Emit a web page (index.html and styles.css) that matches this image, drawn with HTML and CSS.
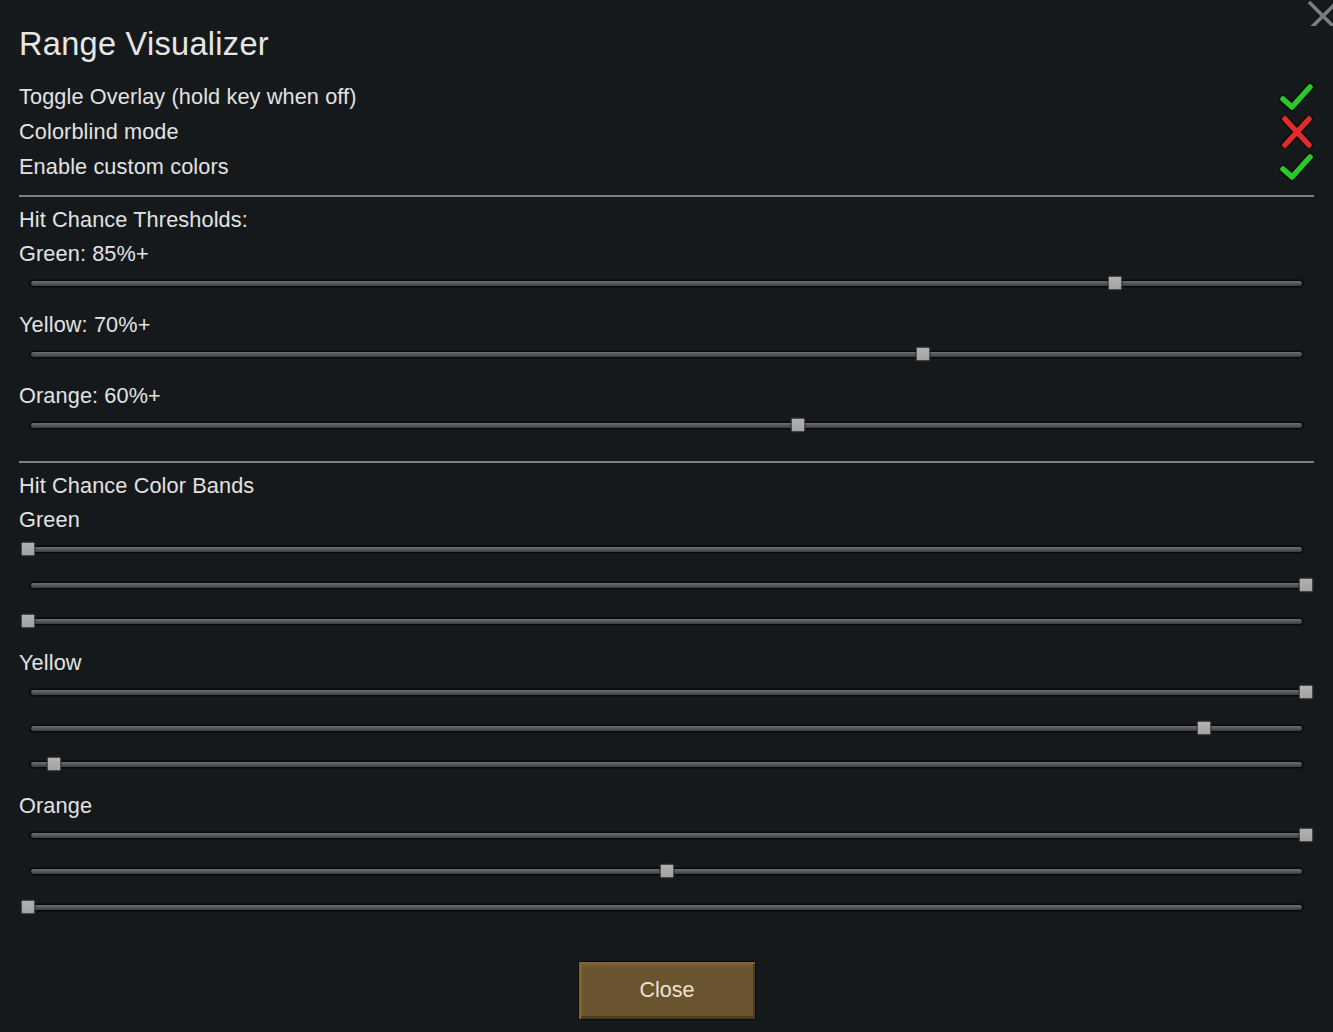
FILE: index.html
```html
<!DOCTYPE html>
<html>
<head>
<meta charset="utf-8">
<link rel="stylesheet" href="styles.css">
</head>
<body>
<div class="window">
  <svg class="close-x" width="26" height="26" viewBox="0 0 26 26"><path d="M2 2 L30 30 M2 30 L30 2" stroke="#7c7c7c" stroke-width="3.6" fill="none"/></svg>
  <h1 class="title">Range Visualizer</h1>

  <div class="options">
    <div class="option"><span>Toggle Overlay (hold key when off)</span>
      <svg class="icon" width="36" height="32" viewBox="0 0 36 32"><path class="ck-out" d="M4 18 L13 26 L31 6"/><path class="ck-in" d="M4 18 L13 26 L31 6"/></svg></div>
    <div class="option"><span>Colorblind mode</span>
      <svg class="icon" width="36" height="32" viewBox="0 0 36 32"><path class="x-out" d="M6 3 L30 29 M30 3 L6 29"/><path class="x-in" d="M6 3 L30 29 M30 3 L6 29"/></svg></div>
    <div class="option"><span>Enable custom colors</span>
      <svg class="icon" width="36" height="32" viewBox="0 0 36 32"><path class="ck-out" d="M4 18 L13 26 L31 6"/><path class="ck-in" d="M4 18 L13 26 L31 6"/></svg></div>
  </div>

  <div class="sep sep-a"></div>

  <div class="heading">Hit Chance Thresholds:</div>
  <div class="thresholds">
    <div class="tlabel">Green: 85%+</div>
    <div class="slider short"><div class="track"></div><div class="handle" style="left:1096px"></div></div>
    <div class="tlabel">Yellow: 70%+</div>
    <div class="slider short"><div class="track"></div><div class="handle" style="left:904px"></div></div>
    <div class="tlabel">Orange: 60%+</div>
    <div class="slider short"><div class="track"></div><div class="handle" style="left:779px"></div></div>
  </div>

  <div class="sep sep-b"></div>

  <div class="heading">Hit Chance Color Bands</div>
  <div class="band first">
    <div class="blabel">Green</div>
    <div class="slider"><div class="track"></div><div class="handle" style="left:9px"></div></div>
    <div class="slider"><div class="track"></div><div class="handle" style="left:1287px"></div></div>
    <div class="slider"><div class="track"></div><div class="handle" style="left:9px"></div></div>
  </div>
  <div class="band">
    <div class="blabel">Yellow</div>
    <div class="slider"><div class="track"></div><div class="handle" style="left:1287px"></div></div>
    <div class="slider"><div class="track"></div><div class="handle" style="left:1185px"></div></div>
    <div class="slider"><div class="track"></div><div class="handle" style="left:35px"></div></div>
  </div>
  <div class="band">
    <div class="blabel">Orange</div>
    <div class="slider"><div class="track"></div><div class="handle" style="left:1287px"></div></div>
    <div class="slider"><div class="track"></div><div class="handle" style="left:648px"></div></div>
    <div class="slider"><div class="track"></div><div class="handle" style="left:9px"></div></div>
  </div>

  <div class="footer"><button class="btn">Close</button></div>
</div>
</body>
</html>
```

FILE: styles.css
```css
html, body {
  margin: 0;
  padding: 0;
  background: #16191c;
}
body {
  width: 1333px;
  height: 1032px;
  overflow: hidden;
  font-family: "Liberation Sans", Arial, sans-serif;
  color: #e2e2e2;
}
.window {
  position: relative;
  padding: 24px 19px 0 19px;
  height: 1032px;
  box-sizing: border-box;
}
.close-x {
  position: absolute;
  top: 0;
  right: 0;
  overflow: hidden;
}
.title {
  margin: 0 0 15px 0;
  font-weight: normal;
  font-size: 32.5px;
  line-height: 40px;
  letter-spacing: 0.3px;
  color: #e6e6e6;
}
.options {
  display: flex;
  flex-direction: column;
}
.option {
  height: 35px;
  display: flex;
  align-items: center;
  justify-content: space-between;
  font-size: 21.7px;
  letter-spacing: 0.12px;
}
.icon {
  margin-right: -1px;
}
.ck-out, .x-out {
  fill: none;
  stroke: #0b0d0b;
  stroke-width: 8.5;
  stroke-linecap: round;
  stroke-linejoin: round;
}
.ck-in {
  fill: none;
  stroke: #29c92b;
  stroke-width: 5.5;
  stroke-linecap: round;
  stroke-linejoin: round;
}
.x-in {
  fill: none;
  stroke: #e02b2b;
  stroke-width: 5.5;
  stroke-linecap: round;
}
.sep {
  height: 2px;
  background: #7f8082;
}
.sep-a {
  margin-top: 11px;
}
.sep-b {
  margin-top: 24px;
}
.heading {
  margin-top: 6px;
  height: 34px;
  line-height: 34px;
  font-size: 21.7px;
  letter-spacing: 0.12px;
}
.tlabel {
  height: 34px;
  line-height: 34px;
  font-size: 21.7px;
  letter-spacing: 0.12px;
}
.thresholds .slider {
  margin-bottom: 13px;
}
.thresholds .slider:last-child {
  margin-bottom: 0;
}
.slider {
  position: relative;
  height: 36px;
  display: flex;
  align-items: center;
}
.slider.short {
  height: 24px;
}
.track {
  flex: 1;
  margin: 0 11px 0 11px;
  height: 7px;
  box-sizing: border-box;
  border: 1px solid #08090a;
  border-radius: 4px;
  background: linear-gradient(#6e6f70 0%, #5a5b5c 40%, #3c3d3e 100%);
  box-shadow: 0 0 0 1px #0e1012;
}
.handle {
  position: absolute;
  top: 50%;
  width: 15px;
  height: 15px;
  transform: translate(-50%, -50%);
  box-sizing: border-box;
  border: 1px solid #2a2b2c;
  border-radius: 2px;
  background: linear-gradient(#b2b2b2, #a2a2a2);
}
.band {
  margin-top: 13px;
}
.band.first {
  margin-top: 6px;
}
.blabel {
  height: 22px;
  line-height: 22px;
  font-size: 21.7px;
  letter-spacing: 0.12px;
}
.footer {
  display: flex;
  justify-content: center;
  margin-top: 36px;
}
.btn {
  width: 178px;
  height: 59px;
  box-sizing: border-box;
  border: 1px solid #0b0a07;
  background: #6a542f;
  box-shadow: inset 2px 2px 0 #7f6739, inset -2px -3px 0 #4d3b1f, inset 4px 5px 0 #735c33;
  color: #ece3cf;
  font-family: "Liberation Sans", Arial, sans-serif;
  font-size: 21.5px;
  padding: 0;
  margin-left: 1px;
}
```
